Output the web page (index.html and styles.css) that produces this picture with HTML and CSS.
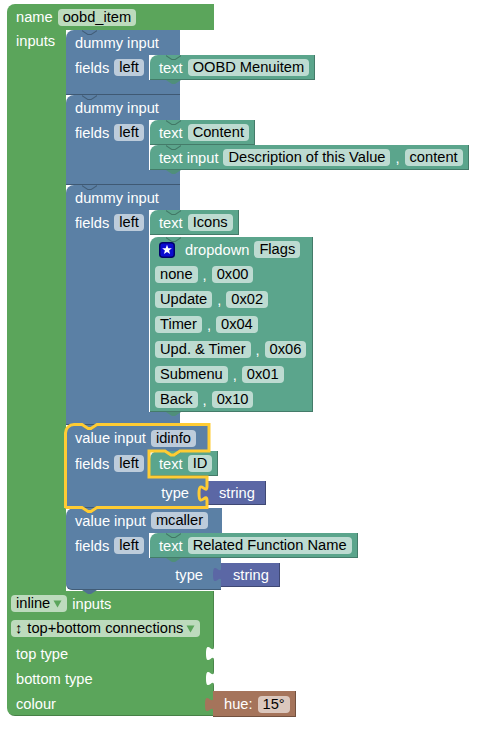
FILE: index.html
```html
<!DOCTYPE html>
<html>
<head>
<meta charset="utf-8">
<link rel="stylesheet" href="styles.css">
</head>
<body>
<div class="ws">
  <div class="factory">
    <div class="g-top row"><span>name</span><span class="pill">oobd_item</span></div>
    <div class="g-mid">
      <div class="g-strip"><div class="row r-inputs">inputs</div></div>
      <div class="stack">

        <div class="bb w-d">
          <div class="bhead row">dummy input</div>
          <div class="bbody">
            <div class="bleft"><div class="row"><span>fields</span><span class="pill">left</span></div></div>
            <div class="stmt">
              <div class="tb row bump"><span>text</span><span class="pill">OOBD Menuitem</span></div>
            </div>
          </div>
          <div class="bfoot"></div>
        </div>

        <div class="bb w-d">
          <div class="bhead row">dummy input</div>
          <div class="bbody">
            <div class="bleft"><div class="row"><span>fields</span><span class="pill">left</span></div></div>
            <div class="stmt">
              <div class="tb row"><span>text</span><span class="pill">Content</span></div>
              <div class="tb row bump"><span>text input</span><span class="pill">Description of this Value</span><span>,</span><span class="pill">content</span></div>
            </div>
          </div>
          <div class="bfoot"></div>
        </div>

        <div class="bb w-d">
          <div class="bhead row">dummy input</div>
          <div class="bbody">
            <div class="bleft"><div class="row"><span>fields</span><span class="pill">left</span></div></div>
            <div class="stmt">
              <div class="tb row"><span>text</span><span class="pill">Icons</span></div>
              <div class="tdrop bump">
                <div class="row">
                  <svg class="star" width="16" height="16" viewBox="0 0 16 16"><rect x="0.75" y="0.75" width="14.5" height="14.5" rx="3" fill="#0a0ad0" stroke="#00006a" stroke-width="1.5"/><polygon points="8,2.8 9.3,6.2 12.9,6.3 10.1,8.6 11.1,12.1 8,10.1 4.9,12.1 5.9,8.6 3.1,6.3 6.7,6.2" fill="#fff"/></svg>
                  <span>dropdown</span><span class="pill">Flags</span>
                </div>
                <div class="row rp5"><span class="pill">none</span><span>,</span><span class="pill">0x00</span></div>
                <div class="row rp5"><span class="pill">Update</span><span>,</span><span class="pill">0x02</span></div>
                <div class="row rp5"><span class="pill">Timer</span><span>,</span><span class="pill">0x04</span></div>
                <div class="row rp5"><span class="pill">Upd. &amp; Timer</span><span>,</span><span class="pill">0x06</span></div>
                <div class="row rp5"><span class="pill">Submenu</span><span>,</span><span class="pill">0x01</span></div>
                <div class="row rp5"><span class="pill">Back</span><span>,</span><span class="pill">0x10</span></div>
              </div>
            </div>
          </div>
          <div class="bfoot f13"></div>
        </div>

        <div class="bb w-v1">
          <div class="bhead row h26"><span>value input</span><span class="pill">idinfo</span></div>
          <div class="bbody">
            <div class="bleft"><div class="row"><span>fields</span><span class="pill">left</span></div></div>
            <div class="stmt">
              <div class="tb row bump"><span>text</span><span class="pill">ID</span></div>
            </div>
          </div>
          <div class="btype">
            <div class="btcell"><span>type</span></div>
            <div class="sblk"><svg class="otab" width="8" height="25" viewBox="0 0 8 25"><path d="M8.5,5 C8,15 0,-3 0,12.5 S8,10 8.5,20 Z"/></svg>string</div>
          </div>
          <svg class="selhl" width="154" height="98" viewBox="-5 -5 154 98"><path d="M-0.5,83 V8 A8.5,8.5 0 0 1 8,-0.5 H16 l6,4 h3 l6,-4 H143 V26 H114 l-6,4 h-3 l-6,-4 H83 V52 H141 V61 c0,10 -8,-8 -8,7.5 s8,-2.5 8,7.5 V82.5 H31 l-6,4 h-3 l-6,-4 H-0.5 Z"/></svg>
        </div>

        <div class="bb w-v2 last-b">
          <div class="bhead row"><span>value input</span><span class="pill">mcaller</span></div>
          <div class="bbody">
            <div class="bleft"><div class="row"><span>fields</span><span class="pill">left</span></div></div>
            <div class="stmt">
              <div class="tb row bump"><span>text</span><span class="pill">Related Function Name</span></div>
            </div>
          </div>
          <div class="btype">
            <div class="btcell"><span>type</span></div>
            <div class="sblk"><svg class="otab" width="8" height="25" viewBox="0 0 8 25"><path d="M8.5,5 C8,15 0,-3 0,12.5 S8,10 8.5,20 Z"/></svg>string</div>
          </div>
        </div>

      </div>
    </div>
    <div class="g-bot">
      <div class="g-cell row rp4"><span class="pill">inline<svg class="arr" width="9" height="8" viewBox="0 0 9 8"><polygon points="0.5,0.5 8.5,0.5 4.5,7.5"/></svg></span><span>inputs</span></div>
      <div class="g-cell row rp4"><span class="pill pill-conn"><span class="updown">↕</span><span>top+bottom connections</span><svg class="arr" width="9" height="8" viewBox="0 0 9 8"><polygon points="0.5,0.5 8.5,0.5 4.5,7.5"/></svg></span></div>
      <div class="g-cell row"><span>top type</span><svg class="vnotch" width="9" height="25" viewBox="0 0 9 25"><path d="M9,5 C9,15 1,-3 1,12.5 S9,10 9,20 Z"/></svg></div>
      <div class="g-cell row"><span>bottom type</span><svg class="vnotch" width="9" height="25" viewBox="0 0 9 25"><path d="M9,5 C9,15 1,-3 1,12.5 S9,10 9,20 Z"/></svg></div>
      <div class="g-crow">
        <div class="g-cell row g-last"><span>colour</span></div>
        <div class="cblk row"><svg class="otab" width="8" height="25" viewBox="0 0 8 25"><path d="M8.5,5 C8,15 0,-3 0,12.5 S8,10 8.5,20 Z"/></svg><span>hue:</span><span class="pill">15°</span></div>
      </div>
    </div>
  </div>
</div>
</body>
</html>
```

FILE: styles.css
```css
* { box-sizing: border-box; }

body {
  margin: 0;
  background: #fff;
  font-family: "Liberation Sans", Arial, sans-serif;
  font-size: 14.667px;
  color: #fff;
}

.ws { padding: 4px 0 0 7px; }

.factory {
  display: flex;
  flex-direction: column;
  align-items: flex-start;
}

.row {
  display: flex;
  align-items: center;
  gap: 5px;
  height: 25px;
  padding-left: 9px;
  white-space: nowrap;
}

.rp4 { padding-left: 4px; }
.rp5 { padding-left: 5px; }

.pill {
  display: inline-flex;
  align-items: center;
  height: 17px;
  line-height: 17px;
  padding: 0 5px;
  border-radius: 4px;
  background: rgba(255, 255, 255, 0.6);
  color: #000;
}

.pill-conn { padding-left: 4px; }

/* green factory block */
.g-top {
  width: 207px;
  height: 26px;
  background: #5ba55b;
  border-top-left-radius: 8px;
}

.g-mid { display: flex; align-items: stretch; }

.g-strip {
  width: 59px;
  background: #5ba55b;
}

.r-inputs { height: 22px; }

.stack {
  display: flex;
  flex-direction: column;
  align-items: flex-start;
  padding-bottom: 1px;
}

.g-bot { display: flex; flex-direction: column; }

.g-cell {
  width: 207px;
  height: 25px;
  background: #5ba55b;
  box-shadow: inset -1px 0 0 rgba(0, 0, 0, 0.18);
}

.g-last {
  border-bottom-left-radius: 8px;
  box-shadow: inset -1px -1px 0 rgba(0, 0, 0, 0.22);
}

.g-crow { display: flex; align-items: flex-start; }

.vnotch {
  margin-left: auto;
  align-self: flex-start;
  fill: #fff;
}

.arr { fill: #5ba55b; margin-left: 3px; }

.updown {
  font-family: "Liberation Sans", "DejaVu Sans", sans-serif;
  margin-right: 5px;
}

/* blue input blocks */
.bb {
  position: relative;
  display: flex;
  flex-direction: column;
  align-items: flex-start;
}

.bb::before,
.tb::before,
.tdrop::before {
  content: "";
  position: absolute;
  left: 16px;
  top: 0;
  width: 15px;
  height: 5px;
  background: rgba(0, 0, 0, 0.28);
  clip-path: polygon(0 0, 6px 4px, 9px 4px, 15px 0, 15px 1.3px, 9.4px 5px, 5.6px 5px, 0 1.3px);
  z-index: 1;
}

.bhead {
  background: #5b80a5;
  border-top-left-radius: 8px;
}

.h26 { height: 26px; }

.bbody { display: flex; align-items: stretch; }

.bleft {
  width: 83px;
  background: #5b80a5;
}

.stmt {
  display: flex;
  flex-direction: column;
  align-items: flex-start;
}

.bfoot {
  height: 15px;
  background: #5b80a5;
  border-bottom: 1px solid rgba(0, 0, 0, 0.3);
}

.f13 { height: 13px; }

.w-d .bhead,
.w-d .bfoot { width: 114px; }

.w-v1 .bhead { width: 143px; }
.w-v1 .btcell { width: 141px; }
.w-v2 .bhead { width: 156px; }
.w-v2 .btcell { width: 155px; }

.btype { display: flex; align-items: flex-start; }

.btcell {
  height: 32px;
  background: #5b80a5;
  display: flex;
  justify-content: flex-end;
  align-items: flex-start;
  padding: 5px 18px 0 0;
  line-height: 24px;
  box-shadow: inset 0 -1px 0 rgba(0, 0, 0, 0.28);
}

.last-b .btcell { border-bottom-left-radius: 6px; }

.last-b::after {
  content: "";
  position: absolute;
  left: 16px;
  bottom: -4px;
  width: 15px;
  height: 4px;
  background: #4f7091;
  clip-path: polygon(0 0, 100% 0, 60% 100%, 40% 100%);
}

/* string / colour output blocks */
.sblk {
  position: relative;
  margin-top: 5px;
  height: 24px;
  line-height: 24px;
  padding: 0 11px 0 12px;
  background: #5b67a5;
  box-shadow: inset -1px -1px 0 rgba(0, 0, 0, 0.3);
}

.otab {
  position: absolute;
  left: -8px;
  top: 0;
}

.sblk .otab { fill: #5b67a5; top: -1px; }

.cblk {
  position: relative;
  margin-left: -1px;
  height: 26px;
  padding-left: 11px;
  padding-right: 6px;
  background: #a5745b;
  box-shadow: inset -1px -1px 0 rgba(0, 0, 0, 0.3);
}

.cblk .otab { fill: #a5745b; top: 1px; }

/* teal field blocks */
.tb {
  position: relative;
  background: #5ba58c;
  border-top-left-radius: 8px;
  padding-right: 6px;
  margin-left: 1px;
  box-shadow: inset -1px -1px 0 rgba(0, 0, 0, 0.25);
}

.tdrop {
  position: relative;
  width: 163px;
  margin-top: 2px;
  margin-left: 1px;
  background: #5ba58c;
  border-top-left-radius: 8px;
  box-shadow: inset -1px -1px 0 rgba(0, 0, 0, 0.25);
}

.star { margin-right: 5px; }

.bump::after {
  content: "";
  position: absolute;
  left: 16px;
  bottom: -4px;
  width: 15px;
  height: 4px;
  background: #4f8f7a;
  clip-path: polygon(0 0, 100% 0, 60% 100%, 40% 100%);
}

/* selection highlight */
.selhl {
  position: absolute;
  left: -5px;
  top: -5px;
  z-index: 3;
  pointer-events: none;
  fill: none;
  stroke: #fc3;
  stroke-width: 3;
}
```
